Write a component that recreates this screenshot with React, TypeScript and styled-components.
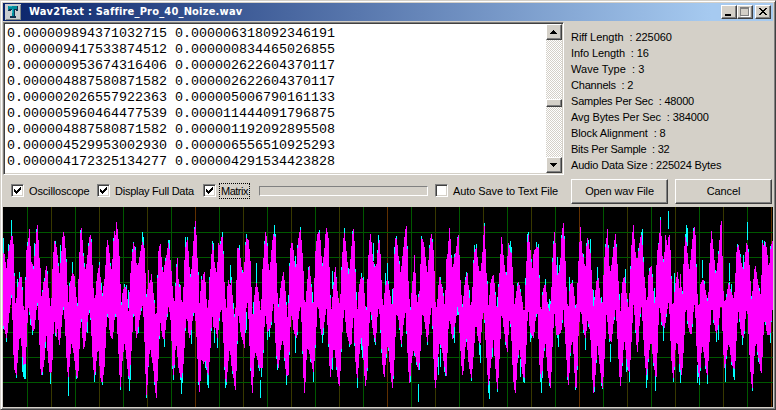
import React from "react";
import styled, { createGlobalStyle, css } from "styled-components";

const Global = createGlobalStyle`
  * { box-sizing: border-box; }
  body { margin: 0; background: #d4d0c8; overflow: hidden; }
`;

const raised = css`
  border: 1px solid;
  border-color: #fff #404040 #404040 #fff;
  box-shadow: inset -1px -1px 0 #808080;
  background: #d4d0c8;
`;
const sunken = css`
  border: 1px solid;
  border-color: #808080 #fff #fff #808080;
  box-shadow: inset 1px 1px 0 #404040, inset -1px -1px 0 #d4d0c8;
  background: #fff;
`;

const Window = styled.main`
  width: 776px;
  height: 410px;
  padding: 2px;
  display: flex;
  flex-direction: column;
  border: 1px solid;
  border-color: #d4d0c8 #404040 #404040 #d4d0c8;
  box-shadow: inset 1px 1px 0 #fff, inset -1px -1px 0 #808080;
  background: #d4d0c8;
  color: #000;
  font: 11px "Liberation Sans", Arial, sans-serif;
`;
const TitleBar = styled.header`
  height: 18px;
  flex: none;
  display: flex;
  align-items: center;
  padding: 0 2px;
  background: linear-gradient(90deg, #0a246a, #a6caf0 92%);
`;
const Title = styled.h1`
  flex: 1;
  margin: 0 0 0 8px;
  font: bold 11px/18px "DejaVu Sans Condensed", "DejaVu Sans", sans-serif;
  letter-spacing: 0.2px;
  white-space: pre;
  color: #fff;
`;
const Caption = styled.button<{ $gap?: boolean }>`
  ${raised}
  width: 16px;
  height: 14px;
  padding: 0;
  margin-left: ${(p) => (p.$gap ? 2 : 0)}px;
  display: flex;
`;
const Upper = styled.section`
  display: flex;
  height: 154px;
  flex: none;
  padding-top: 1px;
`;
const TextBox = styled.div`
  ${sunken}
  width: 561px;
  height: 153px;
  padding: 1px;
  display: flex;
`;
const Samples = styled.pre`
  flex: 1;
  margin: 0;
  padding: 2px 0 0 2px;
  font: 13.333px/16px "Liberation Mono", monospace;
  overflow: hidden;
`;
const Scroll = styled.div`
  width: 16px;
  display: flex;
  flex-direction: column;
  background: repeating-conic-gradient(#fff 0 25%, #d4d0c8 0 50%) 0 0 / 2px 2px;
`;
const ScrollPart = styled.div<{ $h: number; $top?: number }>`
  ${raised}
  height: ${(p) => p.$h}px;
  margin-top: ${(p) => p.$top ?? 0}px;
  display: flex;
`;
const Info = styled.div`
  padding: 7px 0 0 7px;
  line-height: 16px;
  white-space: pre;
`;
const Line = styled.div<{ $ls: number }>`
  letter-spacing: ${(p) => p.$ls}px;
`;
const Controls = styled.section`
  height: 32px;
  flex: none;
  display: flex;
  align-items: center;
  padding: 0 1px 1px 8px;
`;
const Check = styled.label<{ $w: number }>`
  width: ${(p) => p.$w}px;
  height: 17px;
  display: flex;
  align-items: center;
  white-space: nowrap;
`;
const Box = styled.span`
  ${sunken}
  width: 13px;
  height: 13px;
  flex: none;
  display: flex;
`;
const Label = styled.span<{ $focus?: boolean; $ls: number }>`
  margin-left: 3px;
  padding: 0 1px;
  line-height: 14px;
  border: 1px ${(p) => (p.$focus ? "dotted #000" : "solid transparent")};
  letter-spacing: ${(p) => p.$ls}px;
`;
const Progress = styled.div`
  width: 169px;
  height: 10px;
  margin-right: 7px;
  border: 1px solid;
  border-color: #808080 #fff #fff #808080;
`;
const Push = styled.button<{ $gap?: boolean }>`
  ${raised}
  width: 97px;
  height: 25px;
  padding: 0 0 1px;
  margin-left: ${(p) => (p.$gap ? 7 : 0)}px;
  margin-top: 1px;
  font: inherit;
  letter-spacing: -0.12px;
  color: #000;
`;
const Scope = styled.svg`
  display: block;
  width: 770px;
  height: 200px;
  flex: none;
  background: #000;
`;

const rows = [
  "0.000009894371032715 0.000006318092346191",
  "0.000009417533874512 0.000000834465026855",
  "0.000000953674316406 0.000002622604370117",
  "0.000004887580871582 0.000002622604370117",
  "0.000002026557922363 0.000005006790161133",
  "0.000005960464477539 0.000011444091796875",
  "0.000004887580871582 0.000001192092895508",
  "0.000004529953002930 0.000006556510925293",
  "0.000004172325134277 0.000004291534423828",
];
const info: [string, number][] = [
  ["Riff Length  : 225060", -0.05],
  ["Info Length  : 16", -0.1],
  ["Wave Type  : 3", 0.05],
  ["Channels  : 2", -0.2],
  ["Samples Per Sec  : 48000", -0.2],
  ["Avg Bytes Per Sec  : 384000", -0.1],
  ["Block Alignment  : 8", -0.1],
  ["Bits Per Sample  : 32", -0.23],
  ["Audio Data Size : 225024 Bytes", -0.17],
];

// Envelope points are stored in thirds of a pixel, in four segments.
type Segment = { at: number; top: string; bottom: string; peaks: string };
const segments: Segment[] = [
  {
    at: 0,
    top: "9,145 12,150 18,205 24,150 30,115 36,92 40,135 43,275 46,310 50,300 54,235 60,215 64,215 67,290 72,330 78,280 80,140 84,120 88,72 92,165 98,180 101,210 106,135 112,60 116,140 120,200 125,330 130,232 134,250 138,182 143,230 148,290 153,330 158,215 163,108 168,130 173,165 178,220 184,160 190,80 194,105 199,190 204,325 210,235 217,205 222,215 228,280 233,340 238,180 243,68 248,135 253,200 258,195 264,140 270,90 275,130 279,270 286,295 290,240 297,180 303,265 308,290 315,210 322,105 327,155 331,205 336,190 341,130 344,78 346,125 349,50 354,110 358,190 363,325 368,270 374,245 380,260 386,345 391,230 396,160 401,115 406,140 410,200 418,165 424,130 428,110 433,130 437,265 441,300 446,195 449,265 454,207 458,250 463,310 469,360 474,250 476,145 482,118 485,185 490,215 495,175 500,160 505,115 512,180 517,265 522,300 527,270 532,160 535,270 540,240 544,320 549,290 553,190 557,135 561,105 566,165 571,230 577,180 581,120 586,48 590,125 594,230 599,345",
    bottom: "9,340 15,375 20,400 25,340 30,290 34,255 38,290 42,490 46,490 49,510 54,425 60,370 66,420 70,480 76,475 80,370 84,290 90,320 96,365 102,370 108,310 112,260 117,340 122,475 125,510 129,480 134,440 138,350 143,420 148,490 153,500 158,430 162,300 168,395 172,350 178,420 184,350 190,290 196,350 200,430 204,515 209,460 214,400 220,435 226,480 231,520 236,470 240,350 245,310 250,430 256,400 262,340 268,300 274,350 279,470 284,510 290,450 296,415 301,500 306,530 312,480 318,350 324,300 330,385 338,395 344,330 350,310 355,400 361,545 367,450 374,405 380,450 387,520 393,430 398,330 403,300 410,400 416,350 424,300 430,300 435,400 440,570 446,450 452,420 460,480 469,578 474,440 480,330 486,380 492,400 498,340 506,290 514,350 519,510 524,440 530,410 536,480 544,520 550,470 556,340 562,330 568,400 573,370 580,320 586,320 592,400 597,560",
    peaks: "10,100 16,170 19,412 26,118 34,45 52,222 58,202 64,415 68,500 71,515 74,522 76,522 83,110 91,155 91,360 98,390 103,115 107,122 113,105 118,178 127,255 134,440 136,430 148,282 151,537 160,160 166,108 172,345 181,120 187,105 193,102 198,440 205,572 214,405 217,172 220,435 226,250 229,518 250,145 253,175 262,385 270,290 283,530 286,510 296,195 307,530 305,235 316,185 322,105 319,360 352,88 359,480 379,240 388,557 391,525 386,310 400,110 415,385 409,195 427,82 431,97 433,400 442,520 446,485 451,240 457,465 463,290 481,150 493,425 487,185 500,170 508,105 520,525 526,235 523,490 538,465 544,566 547,535 556,97 574,418 571,230 583,67 595,250 553,215",
  },
  {
    at: 200,
    top: "0,290 4,222 8,235 12,202 16,255 20,305 25,320 30,210 34,170 38,117 43,185 48,205 52,215 55,115 60,130 66,95 70,190 75,295 79,350 84,225 90,250 94,225 98,305 103,350 108,300 112,130 118,140 122,175 128,215 133,200 138,100 144,105 150,180 154,300 159,365 165,255 170,235 175,265 180,325 185,340 188,210 192,145 197,80 202,140 206,205 210,190 215,150 221,88 226,95 229,240 235,325 240,265 246,220 250,202 255,270 260,325 264,355 268,220 273,115 277,115 283,180 289,205 294,110 301,75 306,160 310,230 314,330 320,275 327,183 333,255 338,325 343,275 347,150 353,90 358,85 361,120 366,205 372,150 379,68 384,105 388,250 394,330 400,260 406,187 410,245 416,290 422,310 426,170 432,85 438,145 446,220 452,180 460,72 464,140 468,315 472,340 478,245 484,215 490,230 495,310 500,355 505,175 511,88 517,160 523,195 530,190 537,105 542,180 546,300 550,320 556,250 562,225 568,260 575,310 580,300 586,100 590,105 595,170 599,180",
    bottom: "0,500 4,430 10,470 18,465 25,510 30,420 36,300 42,370 48,365 52,400 58,320 64,300 70,360 75,500 79,530 84,460 90,405 96,490 101,510 106,555 110,430 115,300 121,370 128,400 133,430 138,290 145,280 150,440 157,563 162,430 168,450 174,460 180,490 186,490 190,390 196,310 203,380 210,365 215,330 221,270 228,420 234,490 240,430 246,400 250,400 258,500 264,510 270,350 276,310 283,385 290,400 296,310 304,300 308,400 313,563 320,430 328,430 336,480 340,500 346,400 352,280 358,320 365,390 372,350 380,285 384,360 391,515 396,450 401,410 408,460 417,542 422,460 427,360 433,290 440,380 448,410 453,415 460,290 466,440 472,520 478,430 485,380 490,440 497,542 502,470 508,330 514,300 520,380 527,410 533,300 540,320 546,440 552,515 558,440 565,400 571,480 577,550 582,450 588,310 595,340 599,350",
    peaks: "16,490 22,540 25,548 40,115 43,415 52,430 67,82 70,170 76,550 79,540 91,180 100,295 118,120 127,200 139,88 139,375 143,105 148,150 151,450 160,290 169,175 175,490 178,498 181,578 184,515 197,82 200,102 203,405 208,395 214,150 223,60 228,200 230,432 232,495 241,265 259,540 265,270 285,153 286,445 316,530 325,200 337,260 340,530 352,90 366,415 370,390 382,95 398,198 403,420 397,495 409,215 433,70 446,395 445,190 451,390 457,85 470,315 472,548 484,205 484,435 487,460 500,525 503,260 507,150 514,345 520,115 522,410 532,160 535,90 545,445 556,205 560,460 563,175 577,305 580,515 583,125 598,375",
  },
  {
    at: 400,
    top: "0,220 5,200 10,140 18,63 22,190 27,300 32,335 38,228 41,240 43,150 48,285 53,300 58,270 62,240 65,102 68,102 73,135 78,195 83,215 88,145 94,88 99,140 103,245 107,330 112,300 118,217 124,240 131,285 136,325 140,170 145,140 149,68 154,185 160,190 167,150 175,90 179,200 183,290 188,320 194,250 201,205 206,270 211,310 217,290 222,150 228,130 233,175 241,212 247,165 253,63 257,190 262,250 266,340 271,240 280,210 285,285 292,335 296,270 300,190 305,97 312,190 319,230 323,185 325,113 329,140 334,150 338,215 344,325 350,260 356,230 362,270 368,300 374,350 379,200 385,90 390,140 396,215 403,135 411,125 415,130 419,290 424,340 429,255 436,240 442,300 449,335 453,290 458,190 464,82 469,210 476,205 482,195 485,115 491,55 495,190 500,290 505,330 510,240 518,235 523,290 527,325",
    bottom: "0,375 4,415 10,350 18,300 23,420 28,535 34,460 40,430 47,450 56,490 62,420 67,300 74,340 82,410 90,320 97,295 102,480 107,548 112,470 118,400 125,420 131,460 139,512 143,380 150,330 158,400 165,350 175,270 180,400 188,510 194,440 200,385 207,470 214,518 220,440 227,330 234,400 240,415 247,330 253,310 258,400 265,540 272,470 280,380 286,470 293,550 299,430 305,290 312,370 322,440 326,330 334,360 339,490 345,563 352,460 360,415 366,500 373,520 378,400 384,280 390,370 400,400 408,320 414,300 419,470 424,520 430,440 437,400 444,500 451,548 457,400 463,300 470,390 477,385 483,370 491,290 498,420 505,540 511,420 518,400 524,470 527,545",
    peaks: "2,205 10,125 16,90 22,170 31,530 46,225 48,480 55,590 58,495 61,245 85,185 101,140 110,520 115,510 122,485 127,245 134,500 151,130 164,415 172,95 173,330 185,330 187,510 198,200 208,255 220,435 223,120 228,117 237,450 241,475 265,565 268,583 274,225 277,455 292,330 303,102 316,400 331,108 334,125 362,515 370,530 373,533 376,220 383,88 391,412 409,112 415,118 421,530 424,565 427,520 437,222 445,298 449,335 458,160 473,155 475,425 479,180 494,120 502,525 508,215",
  },
  {
    at: 576,
    top: "0,315 4,275 9,150 13,66 17,140 22,160 27,215 32,145 34,98 38,130 44,150 48,270 52,330 58,275 62,228 67,220 71,275 76,300 80,335 84,175 90,120 94,72 98,175 104,205 110,170 118,88 123,190 128,260 134,350 138,240 146,215 152,280 158,325 164,240 167,135 172,60 176,135 182,170 188,150 190,122 197,90 202,190 207,260 213,325 218,213 225,183 231,270 238,335 243,150 249,115 253,45 258,170 264,180 268,90 274,135 279,90 284,170 288,320 293,310 299,240 305,200 310,285 313,207 318,320 323,200 328,95 334,160 340,205 347,150 354,65 358,110 362,250 369,345 374,240 382,225 389,260 396,310 401,200 406,78 411,140 418,220 425,185 431,130 435,48 440,240 445,300 451,285 458,235 465,265 472,290 478,250 482,150 488,120 495,180 501,200 508,160 512,115 518,150 522,250 527,310 532,240 538,183 544,230 550,265 557,290 560,115 564,130 568,112 573,160 579,205 585,122 591,95",
    bottom: "0,548 4,430 9,340 15,290 22,370 29,400 33,330 40,360 45,400 49,480 53,563 58,490 65,400 72,480 79,550 85,440 92,290 98,380 105,410 112,350 120,290 127,430 133,543 140,440 146,400 154,470 160,500 166,390 172,270 178,350 184,440 190,340 198,290 204,410 212,510 218,440 225,395 232,460 240,515 245,380 251,280 258,350 265,370 272,310 280,280 286,440 292,520 298,420 306,400 311,470 317,510 323,410 329,280 337,360 345,385 352,310 358,270 363,440 370,520 376,420 384,440 394,510 400,390 408,270 414,350 421,385 430,330 436,260 441,380 446,490 452,440 460,400 468,480 476,490 482,370 488,300 496,380 502,400 508,330 514,280 520,420 528,548 536,430 541,400 548,450 555,505 560,400 566,320 574,390 582,380 588,310 591,310",
    peaks: "4,495 7,210 28,435 37,105 43,102 52,310 55,560 64,185 70,265 76,275 79,553 98,155 103,470 113,125 122,140 130,320 148,192 151,500 160,530 163,195 169,90 175,115 198,72 202,155 211,548 214,525 230,235 235,250 238,557 247,115 263,407 271,110 277,18 292,530 295,205 310,500 313,533 331,60 334,70 337,180 356,108 364,533 367,515 370,540 380,165 388,435 394,537 407,105 420,412 427,405 431,125 440,160 448,530 475,525 473,515 484,120 460,175 466,238 502,150 508,155 500,420 514,52 541,205 545,425 548,470 566,108 578,200 583,415 586,350",
  },
];

const points = (key: "top" | "bottom" | "peaks") =>
  segments.flatMap((s) =>
    s[key].split(" ").map((pair) => {
      const [x, y] = pair.split(",").map(Number);
      return [s.at - 3 + x / 3, (y - 6) / 3];
    })
  );

const columns = (pts: number[][], dir: 1 | -1) => {
  const out: number[] = [];
  let k = 0;
  for (let c = 0; c < 770; c++) {
    const x = c + 0.5;
    while (k < pts.length - 2 && pts[k + 1][0] < x) k++;
    const [ax, ay] = pts[k];
    const [bx, by] = pts[k + 1];
    const t = Math.max(0, Math.min(1, (x - ax) / (bx - ax)));
    const rough = ((c * 37 + (dir > 0 ? 11 : 5)) % 17) / 17 - 0.4;
    let y = ay + (by - ay) * t + dir * rough * 5;
    pts.forEach(([px, py]) => {
      if (Math.floor(px) === c) y = dir < 0 ? py : Math.max(y, py);
    });
    out.push(y);
  }
  // Each column reaches part of the way to its outermost neighbour.
  return out.map((y, i) => {
    const near = dir * Math.max(dir * (out[i - 1] ?? y), dir * (out[i + 1] ?? y));
    return Math.round(dir * near > dir * y ? y + (near - y) * 0.45 : y);
  });
};

const tops = columns(points("top"), -1);
const bottoms = columns(points("bottom"), 1);
const left = tops.map((y, x) => `M${x} ${y}h1V${Math.max(y + 2, bottoms[x])}h-1z`).join("");
const fringe = tops
  .map((y, x) => {
    const a = (x * 29) % 11 < 2 ? 3 : 0;
    const b = (x * 31) % 13 < 2 ? 3 : 0;
    return a || b ? `M${x} ${y - a}h1V${bottoms[x] + b}h-1z` : "";
  })
  .join("");
const right = points("peaks")
  .map(([px, py]) => {
    const x = Math.floor(px);
    const y = Math.round(py);
    const end = y < 98 ? y + 18 : y - 18;
    return `M${x} ${y}h1V${end}h-1z`;
  })
  .join("");
const gridColor = (i: number) => (i % 8 === 0 ? "#603000" : i % 2 ? "#005800" : "#383800");

const Tick = () => (
  <svg width="11" height="11" viewBox="0 0 11 11" shapeRendering="crispEdges">
    <path d="M2 4h1v1h1v1h1V5h1V4h1V3h1V2h1v3H8v1H7v1H6v1H5v1H4V8H3V7H2z" />
  </svg>
);
const Arrow = ({ down }: { down?: boolean }) => (
  <svg width="14" height="14" shapeRendering="crispEdges">
    <path d={down ? "M3 5h7v1H9v1H8v1H7v1H6V8H5V7H4V6H3z" : "M6 5h1v1h1v1h1v1h1v1H3V8h1V7h1V6h1z"} />
  </svg>
);
const AppIcon = () => (
  <svg width="16" height="16" shapeRendering="crispEdges">
    <path fill="#c8ccd0" d="M0 0h16v16H0z" />
    <path fill="#808888" d="M15 1h1v15H1v-1h14z" />
    <path fill="#103050" d="M3 2h10v5h-2V6h-1v6h1v2H5v-2h2V6H6v1H3z" />
    <path fill="#008c9c" d="M3 2h9v3H9v7H7V5H4v1H3z" />
    <path fill="#20b4c0" d="M4 2h3v1H4zM7 5h1v4H7z" />
  </svg>
);

export default function App() {
  return (
    <>
      <Global />
      <Window>
        <TitleBar>
          <AppIcon />
          <Title>Wav2Text : Saffire_Pro_40_Noize.wav</Title>
          <Caption aria-label="Minimize">
            <svg width="14" height="12"><path d="M3 8h6v2H3z" /></svg>
          </Caption>
          <Caption aria-label="Maximize">
            <svg width="14" height="12" shapeRendering="crispEdges">
              <path fill="#fff" d="M3 2h9v9H3z" />
              <path fill="#808080" d="M2 1h9v9H2z" />
              <path fill="#d4d0c8" d="M3 3h7v6H3z" />
            </svg>
          </Caption>
          <Caption $gap aria-label="Close">
            <svg width="14" height="12" shapeRendering="crispEdges">
              <path d="M3 2h2v1h1v1h2V3h1V2h2v1h-1v1H9v1H8v1h1v1h1v1h1v1H9V8H8V7H6v1H5v1H3V8h1V7h1V6h1V5H5V4H4V3H3z" />
            </svg>
          </Caption>
        </TitleBar>
        <Upper>
          <TextBox>
            <Samples>{rows.join("\n")}</Samples>
            <Scroll>
              <ScrollPart $h={16}><Arrow /></ScrollPart>
              <ScrollPart $h={8} $top={59} />
              <ScrollPart $h={16} $top={50}><Arrow down /></ScrollPart>
            </Scroll>
          </TextBox>
          <Info>
            {info.map(([text, ls]) => <Line key={text} $ls={ls}>{text}</Line>)}
          </Info>
        </Upper>
        <Controls>
          <Check $w={86}><Box><Tick /></Box><Label $ls={-0.15}>Oscilloscope</Label></Check>
          <Check $w={106}><Box><Tick /></Box><Label $ls={-0.25}>Display Full Data</Label></Check>
          <Check $w={56}><Box><Tick /></Box><Label $focus $ls={-0.5}>Matrix</Label></Check>
          <Progress />
          <Check $w={136}><Box /><Label $ls={-0.08}>Auto Save to Text File</Label></Check>
          <Push>Open wav File</Push>
          <Push $gap>Cancel</Push>
        </Controls>
        <Scope viewBox="0 0 770 200" shapeRendering="crispEdges">
          {Array.from({ length: 32 }, (_, i) => i + 1).map((i) => (
            <rect key={i} x={i * 24} y={0} width={1} height={200} fill={gridColor(i)} />
          ))}
          {Array.from({ length: 7 }, (_, i) => i + 1).map((i) => (
            <rect key={i} x={0} y={i * 25} width={770} height={1} fill={i === 4 ? "#602800" : "#005800"} />
          ))}
          <path d={fringe} fill="#0ff" />
          <path d={right} fill="#0ff" />
          <path d={left} fill="#f0f" />
        </Scope>
      </Window>
    </>
  );
}
